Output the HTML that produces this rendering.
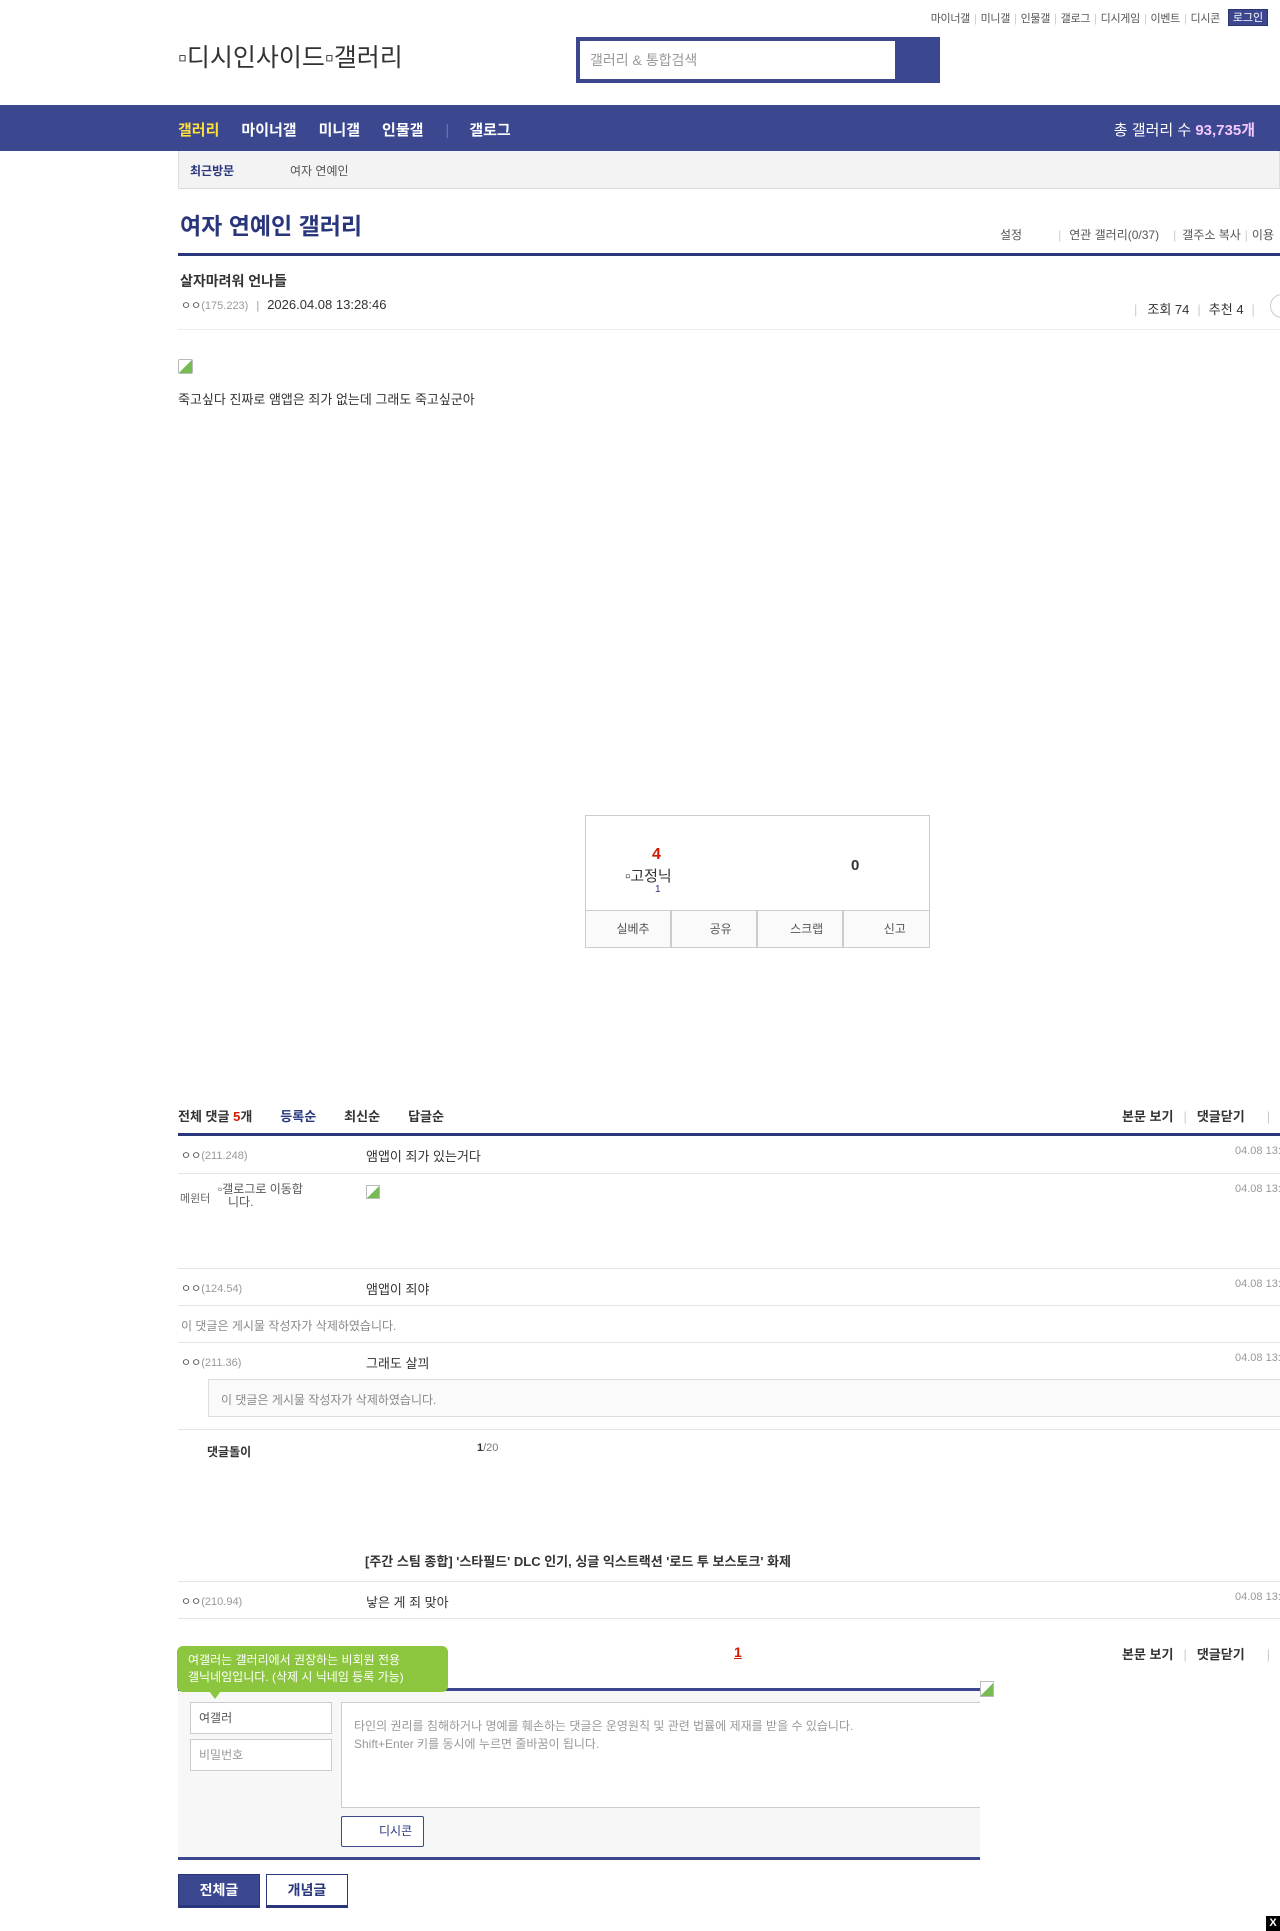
<!DOCTYPE html>
<html><head><meta charset="utf-8">
<style>
*{margin:0;padding:0;box-sizing:border-box}
body{width:1280px;height:1931px;position:relative;background:#fff;font-family:"Liberation Sans","Noto Sans CJK KR",sans-serif;color:#333;overflow:hidden}
.a{position:absolute;white-space:nowrap}
.sep{color:#ccc;margin:0 4px}
.line{position:absolute;left:178px;right:0;height:1px;background:#e5e5e5}
.nick{font-size:11px;color:#555}
.nick span{color:#999}
.date{font-size:11px;color:#999}
.ct{font-size:13px;color:#333}
.btn{position:absolute;border:1px solid #ddd;font-size:12px;color:#555;text-align:center}
</style></head><body>
<div class="a" style="top:10px;right:60px;font-size:11px;color:#555;letter-spacing:-0.3px">마이너갤<span class="sep">|</span>미니갤<span class="sep">|</span>인물갤<span class="sep">|</span>갤로그<span class="sep">|</span>디시게임<span class="sep">|</span>이벤트<span class="sep">|</span>디시콘</div>
<div class="a" style="left:1228px;top:9px;width:40px;height:17px;background:#3b4890;color:#fff;font-size:11px;text-align:center;line-height:17px;border:1px solid #2a3570">로그인</div>
<div class="a" style="left:178px;top:38px;font-size:25px;color:#333">▫디시인사이드▫갤러리</div>
<div class="a" style="left:576px;top:37px;width:364px;height:46px;background:#3b4890"></div>
<div class="a" style="left:580px;top:41px;width:315px;height:38px;background:#fff;font-size:14px;color:#999;line-height:38px;padding-left:10px">갤러리 &amp; 통합검색</div>
<div class="a" style="left:0;top:105px;width:1280px;height:46px;background:#3b4890"></div>
<div class="a" style="left:178px;top:119px;font-size:15px;font-weight:bold;color:#fff"><span style="color:#ffdf3c">갤러리</span><span style="margin-left:22px">마이너갤</span><span style="margin-left:22px">미니갤</span><span style="margin-left:22px">인물갤</span><span style="margin-left:22px;color:#6a76b0;font-weight:normal">|</span><span style="margin-left:20px">갤로그</span></div>
<div class="a" style="right:25px;top:119px;font-size:15px;color:#fff">총 갤러리 수 <b style="color:#f3c7ff">93,735개</b></div>
<div class="a" style="left:178px;top:151px;width:1102px;height:38px;background:#f3f3f3;border:1px solid #ddd;border-top:none"></div>
<div class="a" style="left:190px;top:162px;font-size:12px;font-weight:bold;color:#29367c">최근방문</div>
<div class="a" style="left:290px;top:162px;font-size:12px;color:#555">여자 연예인</div>
<div class="a" style="left:180px;top:207px;font-size:23px;font-weight:bold;color:#29367c">여자 연예인 갤러리</div>
<div class="a" style="left:1000px;top:226px;font-size:12px;color:#555">설정<span class="sep" style="margin:0 8px 0 36px">|</span>연관 갤러리(0/37)<span class="sep" style="margin:0 6px 0 14px">|</span>갤주소 복사<span class="sep">|</span>이용</div>
<div class="a" style="left:178px;top:253px;width:1102px;height:3px;background:#29367c"></div>
<div class="a" style="left:180px;top:271px;font-size:14px;font-weight:bold;color:#333">살자마려워 언나들</div>
<div class="a nick" style="left:181px;top:297px">ㅇㅇ<span>(175.223)</span><span class="sep" style="margin:0 8px">|</span><span style="color:#333;font-size:13px">2026.04.08 13:28:46</span></div>
<div class="a" style="left:1134px;top:299px;font-size:13px;color:#333"><span class="sep" style="margin:0 10px 0 0">|</span>조회 74<span class="sep" style="margin:0 8px">|</span>추천 4<span class="sep" style="margin:0 8px">|</span></div>
<div class="a" style="left:1270px;top:294px;width:24px;height:24px;border:1px solid #ccc;border-radius:50%"></div>
<div class="line" style="top:329px;background:#eee"></div>
<div class="a" style="left:178px;top:359px;width:15px;height:15px;border:1px solid #bbb;border-radius:2px;background:linear-gradient(135deg,#fff 50%,#7b5 50%)"></div>
<div class="a" style="left:178px;top:389px;font-size:13px;color:#333">죽고싶다 진짜로 앰앱은 죄가 없는데 그래도 죽고싶군아</div>
<div class="a" style="left:585px;top:815px;width:345px;height:133px;border:1px solid #ccc"></div>
<div class="a" style="left:652px;top:846px;font-size:16px;font-weight:bold;color:#d31900">4</div>
<div class="a" style="left:625px;top:865px;font-size:15px;color:#333">▫고정닉</div>
<div class="a" style="left:655px;top:884px;font-size:10px;color:#29367c">1</div>
<div class="a" style="left:851px;top:857px;font-size:15px;font-weight:bold;color:#333">0</div>
<div class="btn" style="left:585px;top:910px;width:86px;height:38px;line-height:36px;border:1px solid #ccc;background:#fafafa">&nbsp;&nbsp;&nbsp;실베추</div>
<div class="btn" style="left:671px;top:910px;width:86px;height:38px;line-height:36px;border:1px solid #ccc;background:#fafafa">&nbsp;&nbsp;&nbsp;&nbsp;공유</div>
<div class="btn" style="left:757px;top:910px;width:86px;height:38px;line-height:36px;border:1px solid #ccc;background:#fafafa">&nbsp;&nbsp;&nbsp;&nbsp;스크랩</div>
<div class="btn" style="left:843px;top:910px;width:87px;height:38px;line-height:36px;border:1px solid #ccc;background:#fafafa">&nbsp;&nbsp;&nbsp;&nbsp;&nbsp;신고</div>
<div class="a" style="left:178px;top:1106px;font-size:13px;font-weight:bold;color:#333">전체 댓글 <span style="color:#d31900">5</span>개<span style="color:#29367c;margin-left:28px">등록순</span><span style="margin-left:28px">최신순</span><span style="margin-left:28px">답글순</span></div>
<div class="a" style="left:1122px;top:1106px;font-size:13px;font-weight:bold;color:#333">본문 보기<span class="sep" style="margin:0 10px;font-weight:normal">|</span>댓글닫기<span class="sep" style="margin:0 22px;font-weight:normal">|</span></div>
<div class="a" style="left:178px;top:1133px;width:1102px;height:3px;background:#29367c"></div>
<div class="a nick" style="left:181px;top:1147px">ㅇㅇ<span>(211.248)</span></div>
<div class="a ct" style="left:366px;top:1146px">앰앱이 죄가 있는거다</div>
<div class="a date" style="left:1235px;top:1145px">04.08 13:</div>
<div class="line" style="top:1173px"></div>
<div class="a" style="left:180px;top:1190px;font-size:11px;color:#666">메윈터</div>
<div class="a" style="left:218px;top:1183px;font-size:12px;color:#555;line-height:13px">▫갤로그로 이동합<br>&nbsp;&nbsp;&nbsp;니다.</div>
<div class="a" style="left:366px;top:1185px;width:14px;height:14px;border:1px solid #bbb;background:linear-gradient(135deg,#fff 50%,#7b5 50%)"></div>
<div class="a date" style="left:1235px;top:1183px">04.08 13:</div>
<div class="line" style="top:1268px"></div>
<div class="a nick" style="left:181px;top:1280px">ㅇㅇ<span>(124.54)</span></div>
<div class="a ct" style="left:366px;top:1279px">앰앱이 죄야</div>
<div class="a date" style="left:1235px;top:1278px">04.08 13:</div>
<div class="line" style="top:1305px"></div>
<div class="a" style="left:181px;top:1317px;font-size:12px;color:#888">이 댓글은 게시물 작성자가 삭제하였습니다.</div>
<div class="line" style="top:1342px"></div>
<div class="a nick" style="left:181px;top:1354px">ㅇㅇ<span>(211.36)</span></div>
<div class="a ct" style="left:366px;top:1353px">그래도 살끠</div>
<div class="a date" style="left:1235px;top:1352px">04.08 13:</div>
<div class="a" style="left:208px;top:1379px;width:1080px;height:38px;background:#fafafa;border:1px solid #ddd"></div>
<div class="a" style="left:221px;top:1391px;font-size:12px;color:#888">이 댓글은 게시물 작성자가 삭제하였습니다.</div>
<div class="line" style="top:1429px"></div>
<div class="a" style="left:207px;top:1443px;font-size:12px;font-weight:bold;color:#333">댓글돌이</div>
<div class="a" style="left:477px;top:1442px;font-size:11px;color:#777"><b style="color:#333">1</b>/20</div>
<div class="a" style="left:365px;top:1551px;font-size:13px;font-weight:bold;color:#333">[주간 스팀 종합] '스타필드' DLC 인기, 싱글 익스트랙션 '로드 투 보스토크' 화제</div>
<div class="line" style="top:1581px"></div>
<div class="a nick" style="left:181px;top:1593px">ㅇㅇ<span>(210.94)</span></div>
<div class="a ct" style="left:366px;top:1592px">낳은 게 죄 맞아</div>
<div class="a date" style="left:1235px;top:1591px">04.08 13:</div>
<div class="line" style="top:1618px"></div>
<div class="a" style="left:734px;top:1644px;font-size:14px;font-weight:bold;color:#d31900;text-decoration:underline">1</div>
<div class="a" style="left:1122px;top:1644px;font-size:13px;font-weight:bold;color:#333">본문 보기<span class="sep" style="margin:0 10px;font-weight:normal">|</span>댓글닫기<span class="sep" style="margin:0 22px;font-weight:normal">|</span></div>
<div class="a" style="left:178px;top:1690px;width:802px;height:170px;background:#f7f7f7"></div>
<div class="a" style="left:178px;top:1688px;width:802px;height:3px;background:#3b4890"></div>
<div class="a" style="left:178px;top:1857px;width:802px;height:3px;background:#3b4890"></div>
<div class="a" style="left:177px;top:1646px;width:271px;height:46px;background:#8cc63e;border-radius:6px;color:#fff;font-size:12px;line-height:17px;padding:6px 0 0 11px">여갤러는 갤러리에서 권장하는 비회원 전용<br>갤닉네임입니다. (삭제 시 닉네임 등록 가능)</div>
<div class="a" style="left:209px;top:1691px;width:0;height:0;border-left:6px solid transparent;border-right:6px solid transparent;border-top:8px solid #8cc63e"></div>
<div class="a" style="left:190px;top:1702px;width:142px;height:32px;background:#fff;border:1px solid #ccc;font-size:12px;color:#555;line-height:30px;padding-left:8px">여갤러</div>
<div class="a" style="left:190px;top:1739px;width:142px;height:32px;background:#fff;border:1px solid #ccc;font-size:12px;color:#999;line-height:30px;padding-left:8px">비밀번호</div>
<div class="a" style="left:341px;top:1702px;width:639px;height:106px;background:#fff;border:1px solid #ccc;border-right:none;font-size:12px;color:#999;line-height:18px;padding:14px 12px">타인의 권리를 침해하거나 명예를 훼손하는 댓글은 운영원칙 및 관련 법률에 제재를 받을 수 있습니다.<br>Shift+Enter 키를 동시에 누르면 줄바꿈이 됩니다.</div>
<div class="a" style="left:980px;top:1681px;width:14px;height:16px;border:1px solid #bbb;background:linear-gradient(135deg,#fff 50%,#7b5 50%)"></div>
<div class="a" style="left:341px;top:1816px;width:83px;height:31px;background:#fff;border:1px solid #3b4890;border-radius:2px;font-size:12px;color:#29367c;line-height:29px;padding-left:37px">디시콘</div>
<div class="a" style="left:178px;top:1874px;width:82px;height:34px;background:#3b4890;border:1px solid #29367c;border-bottom:3px solid #29367c;color:#fff;font-size:14px;font-weight:bold;text-align:center;line-height:30px">전체글</div>
<div class="a" style="left:266px;top:1874px;width:82px;height:34px;background:#fff;border:1px solid #29367c;border-bottom:3px solid #29367c;color:#29367c;font-size:14px;font-weight:bold;text-align:center;line-height:30px">개념글</div>
<div class="a" style="left:1266px;top:1916px;width:14px;height:15px;background:#000;color:#fff;font-size:11px;font-weight:bold;text-align:center;line-height:15px">X</div>
</body></html>
